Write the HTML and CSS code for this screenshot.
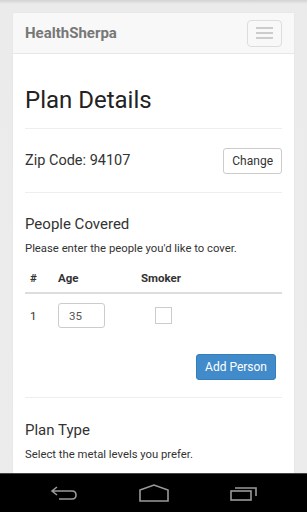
FILE: index.html
```html
<!DOCTYPE html>
<html>

<head>
    <title>HealthSherpa</title>
    <meta charset="utf-8">
    <meta name="viewport" content="width=device-width, initial-scale=1.0">
    <link rel="stylesheet" href="styles.css">
</head>

<body>
    <div class="side">
        <nav class="topbar">
            <span class="brand">HealthSherpa</span>
            <button class="burger">
                <span></span>
                <span></span>
                <span></span>
            </button>
        </nav>

        <main class="indhold">
            <h1>Plan Details</h1>

            <section class="zip">
                <p>Zip Code: 94107</p>
                <button class="knap">Change</button>
            </section>

            <section class="personer">
                <h2>People Covered</h2>
                <p class="hjaelp">Please enter the people you'd like to cover.</p>
                <table>
                    <thead>
                        <tr>
                            <th class="nr">#</th>
                            <th class="alder">Age</th>
                            <th>Smoker</th>
                        </tr>
                    </thead>
                    <tbody>
                        <tr>
                            <td class="nr">1</td>
                            <td class="alder"><input type="text" value="35"></td>
                            <td><span class="boks"></span></td>
                        </tr>
                    </tbody>
                </table>
                <div class="tilfoej">
                    <button class="knap blaa">Add Person</button>
                </div>
            </section>

            <section class="plantype">
                <h2>Plan Type</h2>
                <p class="hjaelp">Select the metal levels you prefer.</p>
            </section>
        </main>
    </div>

    <!-- android knapper nederst -->
    <footer class="android">
        <svg width="28" height="16" viewBox="0 0 28 16">
            <path d="M7 2 L2 6 L7 10 M2 6 H22 Q26 6 26 10 Q26 14 22 14 H9" fill="none" stroke="#9a9a9a" stroke-width="1.6"/>
        </svg>
        <svg width="30" height="18" viewBox="0 0 30 18">
            <path d="M1 6 L15 1 L29 6 V17 H1 Z" fill="none" stroke="#9a9a9a" stroke-width="1.6"/>
        </svg>
        <svg width="28" height="16" viewBox="0 0 28 16">
            <rect x="1" y="6" width="20" height="9" fill="none" stroke="#9a9a9a" stroke-width="1.6"/>
            <path d="M5 3 H26 V11" fill="none" stroke="#9a9a9a" stroke-width="1.6"/>
        </svg>
    </footer>
</body>

</html>
```

FILE: styles.css
```css
body {
    margin: 0;
    background: linear-gradient(#d2d2d2, #ebebeb 4px, #ececec);
    font-family: Roboto, "Liberation Sans", sans-serif;
    color: #333;
    height: 512px;
    overflow: hidden;
}

.side {
    margin: 13px 13px 0;
    background: white;
    box-shadow: 0 0 2px rgba(0, 0, 0, 0.05);
}

.topbar {
    height: 40px;
    background: #f8f8f8;
    border-bottom: 1px solid #e7e7e7;
    display: flex;
    align-items: center;
    justify-content: space-between;
    padding: 0 12px;
}

.brand {
    font-size: 15px;
    font-weight: bold;
    color: #777;
}

.burger {
    width: 35px;
    height: 27px;
    border: 1px solid #ddd;
    border-radius: 4px;
    background: transparent;
    display: flex;
    flex-direction: column;
    align-items: center;
    justify-content: center;
    gap: 3px;
    padding: 0;
}

.burger span {
    width: 17px;
    height: 2px;
    background: #ccc;
}

.indhold {
    padding: 0 12px 40px;
}

h1 {
    font-size: 24px;
    font-weight: normal;
    margin: 0;
    padding: 33px 0 15px;
    line-height: 26px;
    border-bottom: 1px solid #eee;
    color: #222;
}

.zip {
    display: flex;
    align-items: center;
    justify-content: space-between;
    height: 63px;
    border-bottom: 1px solid #eee;
}

.zip p {
    margin: 0;
    font-size: 14.5px;
}

.knap {
    font-family: Roboto, "Liberation Sans", sans-serif;
    font-size: 12px;
    color: #333;
    background: white;
    border: 1px solid #ccc;
    border-radius: 3px;
    height: 26px;
    padding: 0 8px;
}

.blaa {
    background: #428bca;
    border-color: #357ebd;
    color: white;
    padding: 0 8px;
}

h2 {
    font-size: 15px;
    font-weight: normal;
    margin: 0;
    line-height: 18px;
}

.personer {
    padding-top: 22px;
    border-bottom: 1px solid #eee;
}

.hjaelp {
    font-size: 11.3px;
    margin: 8px 0 0;
    line-height: 15px;
}

table {
    width: 100%;
    border-collapse: collapse;
    margin-top: 7px;
    font-size: 11.5px;
}

th {
    text-align: left;
    font-weight: bold;
    height: 29px;
    padding: 0 5px;
    border-bottom: 2px solid #ddd;
}

td {
    padding: 0 5px;
    height: 43px;
}

.nr {
    width: 18px;
}

.alder {
    width: 73px;
}

input {
    width: 47px;
    height: 25px;
    box-sizing: border-box;
    border: 1px solid #ccc;
    border-radius: 3px;
    padding: 0 10px;
    font-family: Roboto, "Liberation Sans", sans-serif;
    font-size: 11.5px;
    color: #555;
}

.boks {
    display: block;
    width: 17px;
    height: 17px;
    box-sizing: border-box;
    border: 1px solid #ccc;
    margin-left: 14px;
}

.tilfoej {
    display: flex;
    justify-content: flex-end;
    padding: 17px 6px 17px;
}

.plantype {
    padding-top: 23px;
}

.android {
    position: fixed;
    left: 0;
    right: 0;
    bottom: 0;
    height: 38px;
    background: black;
    border-top: 1px solid #444;
    display: flex;
    justify-content: center;
    gap: 61px;
    align-items: center;
}
```
